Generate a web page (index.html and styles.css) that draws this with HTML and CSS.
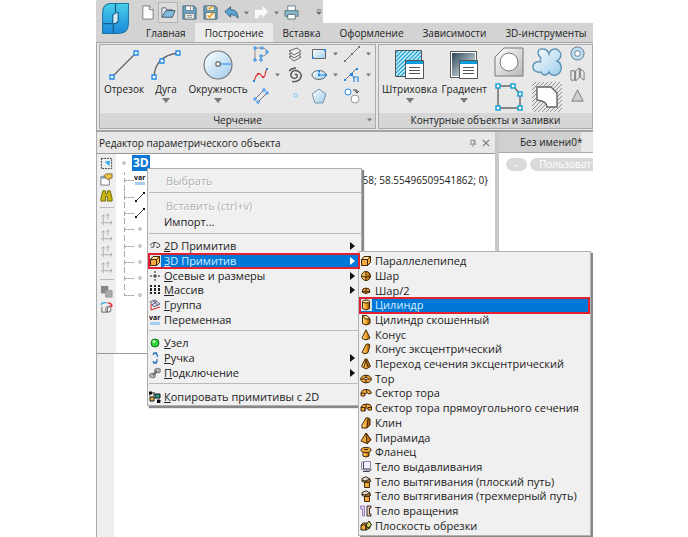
FILE: index.html
```html
<!DOCTYPE html>
<html lang="ru">
<head>
<meta charset="utf-8">
<title>Редактор параметрического объекта</title>
<link rel="stylesheet" href="styles.css">
</head>
<body>
<svg class="defs" aria-hidden="true">
  <defs>
    <linearGradient id="sky" x1="0" y1="0" x2="1" y2="1"><stop offset="0" stop-color="#fff"/><stop offset="1" stop-color="#9bcbea"/></linearGradient>
    <linearGradient id="logo" x1="0" y1="0" x2="0" y2="1"><stop offset="0" stop-color="#48d0e8"/><stop offset="1" stop-color="#1a87dc"/></linearGradient>
    <linearGradient id="dark" x1="0" y1="0" x2="1" y2="1"><stop offset="0" stop-color="#29465a"/><stop offset="1" stop-color="#fff"/></linearGradient>
    <linearGradient id="grey" x1="0" y1="0" x2="1" y2="1"><stop offset="0" stop-color="#fff"/><stop offset="1" stop-color="#b8b8b8"/></linearGradient>
    <linearGradient id="amber"><stop offset="0" stop-color="#ffe39a"/><stop offset=".5" stop-color="#f6a526"/><stop offset="1" stop-color="#8a4b05"/></linearGradient>
    <pattern id="blueHatch" width="4" height="4" patternUnits="userSpaceOnUse"><path fill="#d8f2fc" d="M0 0h4v4H0z"/><path stroke="#22a5d8" stroke-width="1.400" d="M-1 5 5-1M-1 1 1-1M3 5l2-2"/></pattern>
    <pattern id="greyHatch" width="4" height="4" patternUnits="userSpaceOnUse"><path stroke="#888" stroke-width=".9" d="M-1 5 5-1M-1 1 1-1M3 5l2-2"/></pattern>
    <symbol id="down" viewBox="0 0 8 5"><path fill="#777" d="M0 0h8L4 5z"/></symbol>
    <symbol id="window" viewBox="0 0 20 20"><path fill="#fff" stroke="#555" d="M.5.500h18v18H.5z"/><path fill="#0c9bdc" d="M1 1h17v3H1z"/><path stroke="#555" stroke-width="1.2" d="M4 7.500h11M4 10.500h11M4 13.500h11"/></symbol>
    <symbol id="axes" viewBox="0 0 14 14"><g fill="none" stroke="#aaa"><path d="M3.500 13V2M1.500 4l2-2 2 2M1 10.500h12M11 8.500l2 2-2 2M8.500 1v6M7 3l1.500-2L10 3"/></g></symbol>
    <symbol id="var" viewBox="0 0 12 12"><text x="0" y="6" class="glyph-var">var</text><path fill="#a9cdec" d="M1 8h10v3H1z"/></symbol>
    <symbol id="segment" viewBox="0 0 12 12"><path stroke="#444" d="m2 10 8-8"/><path fill="#111" d="M1 9h2v2H1zM9 1h2v2H9z"/></symbol>
    <symbol id="dot" viewBox="0 0 12 12"><circle cx="6" cy="6" r="1.500" fill="#ddd" stroke="#aaa" stroke-width=".8"/></symbol>
    <symbol id="box" viewBox="0 0 12 12"><path fill="#f5ab3c" stroke="#40270a" d="M1.500 4.500h6v6h-6zM1.500 4.500l2.500-3h6.500l-3 3M10.500 1.500v6l-3 3v-6z"/><path fill="#ffe29b" d="M3 4l1.500-2h4.500L7.500 4z"/></symbol>
    <symbol id="sphere" viewBox="0 0 12 12"><circle cx="6" cy="6" r="4.500" fill="url(#amber)" stroke="#40270a"/><path fill="none" stroke="#40270a" d="M1.500 6Q6 8.500 10.500 6M6 1.500v9"/></symbol>
    <symbol id="half" viewBox="0 0 12 12"><path fill="#f5ab3c" stroke="#40270a" d="M2 7a4 4 0 0 1 8 0Q6 10 2 7z"/><path fill="none" stroke="#40270a" d="M6 3v6M2 7q4-2 8 0"/></symbol>
    <symbol id="cyl" viewBox="0 0 12 12"><path fill="url(#amber)" stroke="#40270a" d="M2.500 2.500v7q3.500 3 7 0v-7z"/><ellipse cx="6" cy="2.500" rx="3.500" ry="1.500" fill="#ffe29b" stroke="#40270a"/></symbol>
    <symbol id="slant" viewBox="0 0 12 12"><path fill="url(#amber)" stroke="#40270a" d="M2.500 1.500v8q3.500 3 7.500 0V5z"/><path fill="#ffe29b" stroke="#40270a" d="M2.500 1.500Q7 0 10 4.500 5 6.500 2.500 1.500z"/></symbol>
    <symbol id="cone" viewBox="0 0 12 12"><path fill="url(#amber)" stroke="#40270a" d="M6 .8 2 9q4 3.500 8 0z"/></symbol>
    <symbol id="ecc" viewBox="0 0 12 12"><path fill="url(#amber)" stroke="#40270a" d="m6 1.500-4 8q3 2.500 6 0l2-7.500Q8 0 6 1.500z"/></symbol>
    <symbol id="trans" viewBox="0 0 12 12"><path fill="url(#amber)" stroke="#40270a" d="M5 1 1.500 8.500 6 11l4.500-2.500L7 1z"/><path stroke="#40270a" d="m6 2-2 7M6 2l2 7"/></symbol>
    <symbol id="torus" viewBox="0 0 12 12"><ellipse cx="6" cy="6" rx="5.300" ry="3.800" fill="#f5ab3c" stroke="#40270a"/><ellipse cx="6" cy="5.500" rx="2" ry="1" fill="#fff" stroke="#40270a"/><path stroke="#40270a" d="M6 2v2M6 7v3M1 6h3M8 6h3"/></symbol>
    <symbol id="arc" viewBox="0 0 12 12"><path fill="#f5ab3c" stroke="#40270a" d="M1 8.500V6q1-4 6-3.500 4 .5 4.500 3.500L9 7Q7.500 5 5 6.500v2q-2 1.500-4 0z"/><path stroke="#40270a" fill="none" d="m6 2.500 1 3M1 6.500q2-1 4 0"/></symbol>
    <symbol id="rectarc" viewBox="0 0 12 12"><path fill="#f5ab3c" stroke="#40270a" d="M1 9V5q1-3 6-3 4 0 4.500 3v3H8V6H5v3z"/><path stroke="#40270a" fill="none" d="M1 5.500h4V9M8 5.500h3.500M6 2v3"/></symbol>
    <symbol id="wedge" viewBox="0 0 12 12"><path fill="url(#amber)" stroke="#40270a" d="M6 1 2 8v3h5l3-3V2L8 .8z"/><path fill="none" stroke="#40270a" d="m7 11 1-9"/></symbol>
    <symbol id="pyr" viewBox="0 0 12 12"><path fill="#f5ab3c" stroke="#40270a" d="M6 1 1 9l6 2.500L11 8z"/><path fill="#c9781a" stroke="#40270a" d="m6 1 1 10.500L11 8z"/></symbol>
    <symbol id="flange" viewBox="0 0 12 12"><path fill="url(#amber)" stroke="#40270a" d="M3 5v5q3 2 6 0V5z"/><ellipse cx="6" cy="4" rx="5" ry="2.500" fill="#f5ab3c" stroke="#40270a"/><path stroke="#40270a" d="M4 3.500h4"/></symbol>
    <symbol id="extr" viewBox="0 0 12 12"><path fill="#eef" stroke="#98a" d="M1.500 8.500v-7l2-1h7v7l-2 2z"/><path fill="none" stroke="#445" d="M3 10.500h6l2.500-2M3.500 1v7h7"/></symbol>
    <symbol id="sweep" viewBox="0 0 12 12"><path fill="#ddd" stroke="#40270a" d="M2 2.500 6 .8l4 2v3L7 7 2 5.500z"/><path fill="#f5ab3c" stroke="#40270a" d="M4.500 6.500h5v5h-5zM4.500 6.500 6 5h5L9.500 6.500"/><path fill="none" stroke="#40270a" d="m2 4 3 1 5-2"/></symbol>
    <symbol id="rev" viewBox="0 0 12 12"><path fill="#d9c9ef" stroke="#9a84ba" d="M.5 1h4v10h-2V4h-2z"/><path fill="#eac49c" stroke="#3a2d42" d="M7 1h4v2H9.500v6H11v2H7z"/></symbol>
    <symbol id="cut" viewBox="0 0 12 12"><path fill="#f5ab3c" stroke="#26200f" d="M1 5h5v5H1zM1 5l2-2h4L6 5M6 5l4-2v5l-4 2z"/><path fill="#ccd86a" stroke="#26200f" d="m6 5 3-4 2.500 4L8 8z"/></symbol>
    <symbol id="eye" viewBox="0 0 12 12"><path fill="none" stroke="#444" d="M1 5q5-5 10 0-1 4-4 2M5 2v4q0 2-3 1"/></symbol>
    <symbol id="axis" viewBox="0 0 12 12"><path stroke="#222" d="M6 1v2M6 4v4M6 9v2M1 6h2M4 6h4M9 6h2"/></symbol>
    <symbol id="array" viewBox="0 0 12 12"><path fill="#222" d="M1 1h2v2H1zM5 1h2v2H5zM9 1h2v2H9zM1 4h2v3H1zM5 4h2v3H5zM9 4h2v3H9zM1 8h2v2H1zM5 8h2v2H5zM9 8h2v2H9z"/></symbol>
    <symbol id="group" viewBox="0 0 12 12"><path fill="#d9d9f2" stroke="#667" d="m1 3 5-2 5 4-6 3z"/><path fill="none" stroke="#557" d="m4 1 5 6M8 2 3 6"/><path stroke="#c22" fill="none" d="M2 5v6l9-3"/></symbol>
    <symbol id="node" viewBox="0 0 12 12"><circle cx="6" cy="6" r="4" fill="#2fd33a" stroke="#147019"/><circle cx="5" cy="4.500" r="1.500" fill="#b5ffb0"/></symbol>
    <symbol id="grip" viewBox="0 0 12 12"><path fill="none" stroke="#2c79bd" stroke-width="1.300" d="M5 1q5 1 3 4M8 7q1 3-3 4M4 3l1-2 3 0M4 9l1 2h3"/></symbol>
    <symbol id="link" viewBox="0 0 12 12"><g fill="#bbb" stroke="#888" stroke-width="1.300"><ellipse cx="8.500" cy="3.500" rx="2.800" ry="2.200"/><ellipse cx="3.500" cy="8.500" rx="2.800" ry="2.200"/><path stroke="#666" stroke-width="2" d="m4 8 4-4"/></g></symbol>
    <symbol id="copy" viewBox="0 0 12 12"><path fill="#efb93c" stroke="#111" d="M1 6h4v4H1z"/><path fill="#2c9d8a" stroke="#111" d="M6 3h5v4H6z"/><path stroke="#111" d="M0 1h3v2H0v2M5 1v4M8 9h3v2.500H8"/></symbol>
  </defs>
</svg>

<div class="app">
  <header class="header">
    <svg class="logo" viewBox="0 0 26 30" role="img" aria-label="nanoCAD"><path fill="url(#logo)" stroke="#19769f" d="M8 .5h17.500V20q0 9-9 9.500H.5V10Q.5 1 8 .5z"/><path fill="none" stroke="#145f8e" stroke-width="1.300" d="M13 .5v9M10.500 19.500v-8l5-2v8q-1 3-5 2zM11 20H1M11 20v9"/><path fill="#dde6ea" d="M11 11.500 15 9.500v8q-1 2-4 2z"/></svg>
    <div class="quick">
      <button aria-label="Новый"><svg viewBox="0 0 16 16"><path fill="#fff" stroke="#777" d="M3 1h7l4 4v10H3z"/><path fill="#dcebf3" stroke="#777" d="M10 1v4h4"/></svg></button>
      <button class="hot" aria-label="Открыть"><svg viewBox="0 0 16 16"><path fill="#eee" stroke="#567" d="M1 13V3h4l1 2h6v2"/><path fill="#7fbce0" stroke="#456" d="M1 13 5 6h10l-3 7z"/></svg></button>
      <button aria-label="Сохранить"><svg viewBox="0 0 16 16"><path fill="#63a9ce" stroke="#4d6474" d="M1 1h12l2 2v12H1z"/><path fill="#fff" stroke="#677" d="M4 1h8v5H4zM3 9h10v6H3z"/><path stroke="#777" d="M9 2v3M5 11h6M5 13h6"/></svg></button>
      <button aria-label="Сохранить как"><svg viewBox="0 0 16 16"><path fill="#63a9ce" stroke="#4d6474" d="M1 1h12l2 2v12H1z"/><path fill="#fff6df" stroke="#677" d="M4 1h8v5H4zM3 8h10v7H3z"/><path fill="none" stroke="#e89922" stroke-width="1.500" d="m5 11 2 2 4-5M6 3l1 1 3-2"/></svg></button>
      <button aria-label="Отменить"><svg viewBox="0 0 16 16"><path fill="#5ca7d7" stroke="#36617e" d="m1 7 6-5v3q8 0 8 9-3-4-8-4v3z"/></svg></button>
      <svg class="tick"><use href="#down"/></svg>
      <button aria-label="Повторить"><svg viewBox="0 0 16 16"><path fill="#fafafa" d="M15 7 9 1v4H1v9h4v-3h4v3z"/></svg></button>
      <svg class="tick"><use href="#down"/></svg>
      <button aria-label="Печать"><svg viewBox="0 0 16 16"><path fill="#fff" stroke="#679" d="M4 1h8v6H4z"/><path fill="#88b6cd" stroke="#577" d="M1 6h14v6H1z"/><path fill="#fff" stroke="#577" d="M4 10h8v5H4z"/></svg></button>
      <svg class="tick last" viewBox="0 0 8 8"><path fill="#666" d="M1 0h6v1H1zM0 3h8L4 7z"/></svg>
    </div>
    <nav class="tabs">
      <a href="#">Главная</a><a href="#" class="active">Построение</a><a href="#">Вставка</a><a href="#">Оформление</a><a href="#">Зависимости</a><a href="#">3D-инструменты</a>
    </nav>
  </header>

  <div class="ribbon">
    <section class="panel draw">
      <div class="tools">
        <button class="big"><svg viewBox="0 0 30 30"><path stroke="#666" stroke-width="1.300" d="M2 28 28 2"/><path fill="#fff" stroke="#2389e8" stroke-width="1.300" d="M1 25h4v4H1zM25 1h4v4h-4z"/></svg>Отрезок</button>
        <button class="big"><svg viewBox="0 0 30 30"><path fill="none" stroke="#666" stroke-width="1.300" d="M3 27Q4 6 27 3"/><path fill="#fff" stroke="#2389e8" stroke-width="1.300" d="M1 25h4v4H1zM9 9h4v4H9zM25 1h4v4h-4z"/></svg>Дуга<svg class="drop"><use href="#down"/></svg></button>
        <button class="big"><svg viewBox="0 0 30 30"><circle cx="15" cy="15" r="14" fill="url(#sky)" stroke="#777" stroke-width="1.200"/><path stroke="#2389e8" d="M16 14h12"/><path fill="#fff" stroke="#444" d="M13 12h4v4h-4z"/></svg>Окружность<svg class="drop"><use href="#down"/></svg></button>
        <div class="small">
          <svg viewBox="0 0 16 16"><path fill="none" stroke="#888" d="M2 14V2h8q4 1 4 4 0 4-6 4v4"/><path fill="#fff" stroke="#2389e8" d="M1 1h2v2H1zM8 1h2v2H8zM13 5h2v2h-2zM7 9h2v2H7zM1 13h2v2H1zM7 13h2v2H7z"/></svg>
          <i></i>
          <svg viewBox="0 0 16 16"><g fill="#eee" stroke="#666"><path d="m2 11 8-3 4 3-7 4z"/><path d="m2 8 8-3 4 3-7 4z"/><path d="m2 5 8-3 4 3-7 4z"/></g></svg>
          <svg viewBox="0 0 16 16"><path fill="url(#sky)" stroke="#666" d="M1.500 3.500h13v9h-13z"/><path fill="#2389e8" d="M1 11h2v2H1zM13 3h2v2h-2z"/></svg>
          <svg class="tick"><use href="#down"/></svg>
          <svg viewBox="0 0 16 16"><path stroke="#777" d="M1 15 15 1"/><path fill="#777" d="M0 14h2v2H0zM7 7h2v2H7zM14 0h2v2h-2z"/></svg>
          <svg class="tick"><use href="#down"/></svg>

          <svg viewBox="0 0 16 16"><path fill="none" stroke="#e03838" stroke-width="1.200" d="M1 14Q5 3 8 8t4 0 2-6"/><path fill="#2389e8" d="M0 13h2v2H0zM13 1h2v2h-2z"/><path fill="#d33" d="M4 6h2v2H4zM9 9h2v2H9z"/></svg>
          <svg class="tick"><use href="#down"/></svg>
          <svg viewBox="0 0 16 16"><path fill="none" stroke="#555" stroke-width="1.500" d="M8 8c1-2 3 0 2 2s-5 2-6-1 2-6 5-5.500 6 3 5 6.500-5 5-9 4.500M2 4q3-3 7-3"/></svg>
          <svg viewBox="0 0 16 16"><ellipse cx="8" cy="8" rx="7" ry="4.500" fill="url(#sky)" stroke="#666"/><path stroke="#2389e8" d="M8 8V3M8 8h7"/><path fill="#2389e8" d="M7 3h2v2H7zM7 7h2v2H7zM14 7h2v2h-2z"/></svg>
          <svg class="tick"><use href="#down"/></svg>
          <svg viewBox="0 0 16 16"><path fill="none" stroke="#777" d="M1 13 13 1M7 7l3 4"/><path fill="#2389e8" d="M0 12h2v2H0zM6 6h3v3H6zM12 1h2v2h-2z"/><path fill="none" stroke="#2389e8" stroke-width="1.200" d="M10 15v-5h4v5"/></svg>
          <svg class="tick"><use href="#down"/></svg>

          <svg viewBox="0 0 16 16"><path stroke="#777" d="M2 11 11 2M5 14l9-9"/><path fill="#fff" stroke="#2389e8" d="M1 10h2v2H1zM4 13h2v2H4zM10 1h2v2h-2zM13 4h2v2h-2z"/></svg>
          <i></i>
          <svg viewBox="0 0 16 16"><path fill="#e4f5ff" stroke="#8dc8ef" d="M7 6h3v3H7z"/></svg>
          <svg viewBox="0 0 16 16"><path fill="url(#sky)" stroke="#7895a7" d="m8 1 7 5-3 9H4L1 6z"/></svg>
          <i></i>
          <svg viewBox="0 0 16 16"><circle cx="4" cy="4" r="3" fill="#fff" stroke="#2389e8"/><circle cx="11" cy="11" r="4" fill="#fff" stroke="#999"/><path fill="none" stroke="#444" d="M9 2h4v3M11 3l2 2 2-2"/></svg>
          <i></i>
        </div>
      </div>
      <h2>Черчение<svg class="tick corner"><use href="#down"/></svg></h2>
    </section>

    <section class="panel contour">
      <div class="tools">
        <button class="big"><svg viewBox="0 0 30 30"><path fill="url(#blueHatch)" stroke="#555" d="M.5.500h26v26H.5z"/><use href="#window" x="10" y="10" width="20" height="20"/></svg>Штриховка<svg class="drop"><use href="#down"/></svg></button>
        <button class="big"><svg viewBox="0 0 30 30"><path fill="#fff" stroke="#555" d="M1.500 1.500h26v26h-26z"/><path fill="url(#dark)" d="M3 3h23v23H3z"/><use href="#window" x="10" y="10" width="20" height="20"/></svg>Градиент<svg class="drop"><use href="#down"/></svg></button>
        <div class="medium">
          <svg viewBox="0 0 30 30"><path fill="url(#grey)" stroke="#777" d="M10 1h19v28H1V10z"/><circle cx="15" cy="15" r="9" fill="#fff" stroke="#777"/></svg>
          <svg viewBox="0 0 30 30"><path fill="url(#sky)" stroke="#5b93b5" stroke-width="1.400" d="M9 11C4 7 6 1 11 2c3 0 5 2 6 5 1-5 6-6 9-4 4 3 4 8-1 11 5 2 5 8 3 11-3 5-9 4-11 0-2 4-6 4-8 0-5 1-8-2-8-5 0-5 5-6 8-5-1-1-1-3 0-4z"/></svg>
          <svg viewBox="0 0 30 30"><path fill="none" stroke="#666" stroke-width="1.400" d="M4 4h15l7 8v14H4z"/><path fill="#fff" stroke="#18a3d8" stroke-width="1.500" d="M2 2h4v4H2zM17 2h4v4h-4zM24 10h4v4h-4zM2 24h4v4H2zM24 24h4v4h-4z"/></svg>
          <svg viewBox="0 0 30 30"><path fill="url(#greyHatch)" d="M0 0h30v30H0z"/><path fill="#fff" stroke="#666" stroke-width="1.400" d="M5 5h14l6 6v14H15q0-6-10-7z"/></svg>
        </div>
        <div class="mini">
          <svg viewBox="0 0 16 16"><circle cx="8" cy="8" r="7" fill="#b9ddf3" stroke="#678"/><circle cx="8" cy="8" r="3" fill="#fff" stroke="#678"/></svg>
          <svg viewBox="0 0 16 16"><path fill="#e8e8e8" stroke="#777" d="M1 4h4v10H1zM6 4l4-3v10l-4 4zM11 2l4 3v9l-4-3z"/></svg>
          <svg viewBox="0 0 16 16"><path fill="#d0d0d0" stroke="#777" d="m8 2 6 12H2z"/></svg>
        </div>
      </div>
      <h2>Контурные объекты и заливки</h2>
    </section>
  </div>

  <main class="work">
    <section class="editor">
      <h1>Редактор параметрического объекта
        <button aria-label="Закрепить"><svg viewBox="0 0 10 10"><path fill="none" stroke="#777" d="M2.500 6V1.500h5V6M1 6.500h8M5 7v3M6.500 2v4"/></svg></button>
        <button aria-label="Закрыть"><svg viewBox="0 0 10 10"><path stroke="#777" stroke-width="1.500" d="m1 1 8 8M9 1 1 9"/></svg></button>
      </h1>
      <div class="content">
        <div class="toolbar">
          <svg viewBox="0 0 14 14"><path fill="none" stroke="#333" stroke-dasharray="2 1" d="M1.500 1.500h11v11h-11z"/><path fill="#38aee8" d="m5 5 6-1-1 6z"/></svg>
          <svg viewBox="0 0 14 14"><path fill="#fff" stroke="#777" d="M1 4h9v9H1z"/><path fill="#6aa8cf" d="M1 4h9v2H1z"/><path fill="#efc24b" stroke="#86682c" d="M4 3 7 1h6v4L8 7z"/></svg>
          <svg viewBox="0 0 14 14"><path fill="#c9b510" stroke="#6f6600" d="M3 2h3v3h2V2h3l2 8v3H8V8H6v5H1v-3z"/></svg>
          <hr>
          <svg><use href="#axes"/></svg><svg><use href="#axes"/></svg><svg><use href="#axes"/></svg><svg><use href="#axes"/></svg>
          <hr>
          <svg viewBox="0 0 14 14"><path fill="#888" d="M1 1h8v8H1z"/><path fill="#aaa" stroke="#999" d="M6 6h7v7H6z"/></svg>
          <svg viewBox="0 0 14 14"><path fill="none" stroke="#666" d="M2 6v6h6V6M6 9a3 3 0 1 0 6 0 3 3 0 1 0-6 0"/><path fill="none" stroke="#2fa4df" stroke-width="1.500" d="M1 4q2-3 6-2"/><path fill="none" stroke="#d33" stroke-width="1.500" d="M8 2q5 0 5 4M10 5l3 1"/></svg>
        </div>
        <div class="tree">
          <div class="root"><svg><use href="#dot"/></svg><b>3D</b></div>
          <ul>
            <li><svg><use href="#var"/></svg><span>58; 58.55496509541862; 0}</span></li>
            <li><svg><use href="#segment"/></svg></li>
            <li><svg><use href="#segment"/></svg></li>
            <li><svg><use href="#dot"/></svg></li>
            <li><svg><use href="#dot"/></svg></li>
            <li><svg><use href="#dot"/></svg></li>
            <li><svg><use href="#dot"/></svg></li>
            <li><svg><use href="#dot"/></svg></li>
          </ul>
        </div>
      </div>
      <div class="lower"></div>
    </section>
    <section class="document">
      <div class="doctabs"><a href="#">Без имени0*</a></div>
      <div class="view"><span>-</span><span>Пользоват</span></div>
    </section>
  </main>

  <div class="menu context" role="menu">
    <div class="group one"><button role="menuitem" disabled>Выбрать</button></div>
    <div class="group two"><button role="menuitem" disabled>Вставить (ctrl+v)</button><button role="menuitem">Импорт...</button></div>
    <div class="group six">
      <button role="menuitem" class="sub"><svg><use href="#eye"/></svg><span><u>2</u>D Примитив</span></button>
      <button role="menuitem" class="sub chosen"><svg><use href="#box"/></svg><span><u>3</u>D Примитив</span></button>
      <button role="menuitem" class="sub"><svg><use href="#axis"/></svg><span><u>О</u>севые и размеры</span></button>
      <button role="menuitem" class="sub"><svg><use href="#array"/></svg><span><u>М</u>ассив</span></button>
      <button role="menuitem"><svg><use href="#group"/></svg><span><u>Г</u>руппа</span></button>
      <button role="menuitem"><svg><use href="#var"/></svg><span>Переменная</span></button>
    </div>
    <div class="group three">
      <button role="menuitem"><svg><use href="#node"/></svg><span><u>У</u>зел</span></button>
      <button role="menuitem" class="sub"><svg><use href="#grip"/></svg><span><u>Р</u>учка</span></button>
      <button role="menuitem" class="sub"><svg><use href="#link"/></svg><span><u>П</u>одключение</span></button>
    </div>
    <div class="group end"><button role="menuitem"><svg><use href="#copy"/></svg><span><u>К</u>опировать примитивы с 2D</span></button></div>
  </div>

  <div class="menu primitives" role="menu">
    <button role="menuitem"><svg><use href="#box"/></svg>Параллелепипед</button>
    <button role="menuitem"><svg><use href="#sphere"/></svg>Шар</button>
    <button role="menuitem"><svg><use href="#half"/></svg>Шар/2</button>
    <button role="menuitem" class="chosen"><svg><use href="#cyl"/></svg>Цилиндр</button>
    <button role="menuitem"><svg><use href="#slant"/></svg>Цилиндр скошенный</button>
    <button role="menuitem"><svg><use href="#cone"/></svg>Конус</button>
    <button role="menuitem"><svg><use href="#ecc"/></svg>Конус эксцентрический</button>
    <button role="menuitem"><svg><use href="#trans"/></svg>Переход сечения эксцентрический</button>
    <button role="menuitem"><svg><use href="#torus"/></svg>Тор</button>
    <button role="menuitem"><svg><use href="#arc"/></svg>Сектор тора</button>
    <button role="menuitem"><svg><use href="#rectarc"/></svg>Сектор тора прямоугольного сечения</button>
    <button role="menuitem"><svg><use href="#wedge"/></svg>Клин</button>
    <button role="menuitem"><svg><use href="#pyr"/></svg>Пирамида</button>
    <button role="menuitem"><svg><use href="#flange"/></svg>Фланец</button>
    <button role="menuitem"><svg><use href="#extr"/></svg>Тело выдавливания</button>
    <button role="menuitem"><svg><use href="#sweep"/></svg>Тело вытягивания (плоский путь)</button>
    <button role="menuitem"><svg><use href="#sweep"/></svg>Тело вытягивания (трехмерный путь)</button>
    <button role="menuitem"><svg><use href="#rev"/></svg>Тело вращения</button>
    <button role="menuitem"><svg><use href="#cut"/></svg>Плоскость обрезки</button>
  </div>
</div>
</body>
</html>
```
FILE: styles.css
```css
* { box-sizing: border-box; }
body {
  margin: 0;
  background: #fff;
  color: #222;
  font: 10px/14px "Open Sans", "Noto Sans", sans-serif;
}
button { margin: 0; padding: 0; border: 0; background: none; color: inherit; font: inherit; }
a { color: inherit; text-decoration: none; }
h1, h2, ul { margin: 0; padding: 0; font: inherit; list-style: none; }
svg { display: block; flex: none; }
.defs { position: absolute; width: 0; height: 0; }
.glyph-var { font: bold 7px "Open Sans", sans-serif; fill: #111; }

.app {
  position: relative;
  display: flex;
  flex-direction: column;
  min-height: 100vh;
  margin: 0 95px 0 96px;
  overflow: hidden;
}

/* Title bar and tabs */
.header { position: relative; }
.logo { position: absolute; left: 6px; top: 3px; width: 27px; height: 31px; }
.quick {
  display: flex;
  align-items: center;
  width: fit-content;
  height: 23px;
  padding: 2px 1px 0 41px;
  background: #d3d3d3;
}
.quick button { display: grid; place-items: center; width: 20px; height: 21px; margin-right: 1px; }
.quick .hot { background: #dcdcdc; border: 1px solid #b5b5b5; }
.quick svg { width: 15px; height: 15px; }
.quick .tick, .tick { width: 5px; height: 4px; align-self: center; }
.quick .tick { margin: 0 2px; }
.quick .tick.last { width: 6px; height: 7px; margin: 0 0 0 14px; }
.tabs { display: flex; height: 19px; padding-left: 40px; background: #d3d3d3; }
.tabs a { flex: none; padding: 3px 9px 0 10px; white-space: nowrap; }
.tabs .active { background: #ebebeb; }

/* Ribbon */
.ribbon {
  display: flex;
  gap: 2px;
  padding: 1px 0 1px 2px;
  background: #e8e8e8;
  border: solid #a4a4a4;
  border-width: 1px 0 2px 1px;
}
.panel { border: 1px solid #aaa; }
.draw { flex: 0 0 277px; }
.contour { flex: 1 1 0; min-width: 0; }
.tools { display: flex; height: 68px; padding: 4px 0 0 3px; }
.panel h2 {
  position: relative;
  height: 15px;
  background: #d6d6d6;
  text-align: center;
}
.corner { position: absolute; right: 3px; top: 5px; }
.big { display: flex; flex-direction: column; align-items: center; flex: 0 0 42px; white-space: nowrap; }
.big > svg:first-child { width: 30px; height: 30px; margin: 1px 0 2px; }
.big .drop { width: 8px; height: 5px; margin-top: 2px; }
.draw .big:nth-child(3) { flex-basis: 62px; }
.small { display: grid; grid-template-columns: 20px 12px 24px 24px 9px 24px 8px; grid-auto-rows: 21px; margin: -3px 0 0 2px; }
.small svg { width: 16px; height: 16px; margin: 0 auto; }
.small .tick { width: 5px; height: 4px; margin-top: 6px; align-self: start; }
.contour .big { flex-basis: 54px; }
.medium { display: grid; grid-template-columns: 38px 38px; grid-auto-rows: 35px; padding-left: 3px; margin-top: -2px; }
.medium svg { width: 30px; height: 30px; }
.mini { display: grid; grid-auto-rows: 21px; margin-top: -3px; }
.mini svg { width: 15px; height: 15px; }

/* Work area */
.work { display: flex; flex: 1; }
.editor { display: flex; flex-direction: column; flex: 1 1 0; border-left: 1px solid #aaa; }
.editor h1 {
  display: flex;
  align-items: center;
  height: 21px;
  padding-left: 2px;
  background: #e8e8e8;
}
.editor h1 button { width: 8px; margin-right: 5px; }
.editor h1 button:first-of-type { margin-left: auto; }
.editor h1 svg { width: 8px; height: 8px; }
.content { display: flex; height: 201px; border: solid #999; border-width: 1px 0; }
.toolbar {
  display: flex;
  flex-direction: column;
  align-items: center;
  gap: 3px;
  width: 19px;
  padding: 3px 0;
  background: #eee;
}
.toolbar svg { width: 13px; height: 13px; }
.toolbar hr { width: 14px; margin: 2px 0; border: 0; border-top: 1px solid #bbb; }
.tree { flex: 1; min-width: 0; }
.tree svg { width: 12px; height: 12px; }
.root { display: flex; align-items: center; height: 18px; padding-left: 2px; }
.root b { margin-left: 2px; padding: 1px; background: #0b78d6; color: #fff; font-size: 12px; }
.tree ul { display: grid; grid-auto-rows: 1fr; height: 131px; padding-left: 8px; }
.tree li { position: relative; display: flex; align-items: center; padding-left: 10px; }
.tree li::before {
  content: "";
  position: absolute;
  left: 0;
  top: 0;
  width: 9px;
  height: 50%;
  border: dashed #aaa;
  border-width: 0 0 1px 1px;
}
.tree li:not(:last-child)::after { content: ""; position: absolute; left: 0; top: 50%; height: 50%; border-left: 1px dashed #aaa; }
.tree li span { margin: 0 7px 0 auto; }
.lower { flex: 1; width: 17px; background: #eee; }
.document { flex: 0 0 98px; border-left: 4px solid #c8c8c8; overflow: hidden; }
.doctabs { height: 21px; border-bottom: 1px solid #aaa; background: #e8e8e8; }
.doctabs a { display: block; width: 82px; height: 20px; padding: 3px 0 0 21px; background: #d0d0d0; white-space: nowrap; }
.view { display: flex; gap: 3px; padding: 5px 0 0 7px; color: #fff; }
.view span { padding: 0 9px; border-radius: 7px; background: #dadada; line-height: 13px; }

/* Menus */
.menu {
  position: absolute;
  border: 1px solid #b0b0b0;
  background: #f0f0f0;
  box-shadow: 2px 2px 1px #888;
  font-size: 11px;
}
.menu button { display: flex; align-items: center; gap: 3px; min-height: 0; width: 100%; text-align: left; white-space: nowrap; line-height: 14px; }
.menu button svg { width: 12px; height: 12px; }
.menu button:disabled { padding-left: 17px; color: #b0b0b0; text-shadow: 1px 1px #fff; }
.menu .chosen { background: #0078d7; color: #d8ecff; outline: 2px solid #e3202f; outline-offset: -1px; }
.menu .chosen svg { background: #d7e5ef; }
.context { left: 51px; top: 168px; width: 215px; padding-left: 1px; }
.context .chosen { z-index: 2; width: auto; margin-right: 2px; }
.group { display: grid; grid-auto-rows: 1fr; border-bottom: 1px solid #bbb; }
.one { height: 24px; }
.two { height: 41px; padding: 5px 0 3px; }
.two button:last-child { padding-left: 15px; }
.six { height: 97px; padding: 5px 0 3px; }
.three { height: 53px; padding: 5px 0 3px; }
.end { height: 21px; padding-top: 5px; border: 0; }
.sub { position: relative; }
.sub::after { content: ""; margin: 0 6px 0 auto; border: solid transparent; border-width: 4px 0 4px 5px; border-left-color: #111; }
.sub.chosen::after { margin-right: 4px; border-left-color: #fff; }
.primitives {
  z-index: 1;
  left: 262px;
  top: 251px;
  display: grid;
  grid-auto-rows: 1fr;
  width: 233px;
  height: 285px;
  padding: 2px 1px;
}
```
